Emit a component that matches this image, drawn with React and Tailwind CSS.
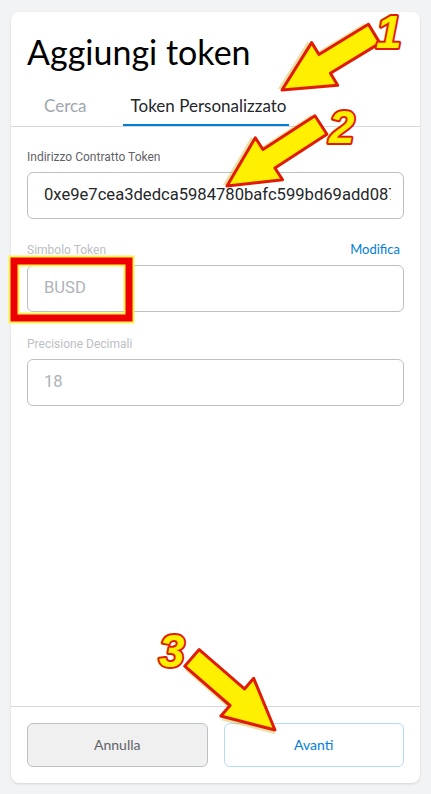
import React from 'react';

const euclid = { fontFamily: 'Lato, "Noto Sans", sans-serif' };

const Arrow = ({ x, y, angle, length }) => {
    const L = length;
    const pts = `0,0 -50,-25 -50,-11 ${-L},-11 ${-L},11 -50,11 -50,25`;
    return (
        <g transform={`translate(${x} ${y}) rotate(${angle})`}>
            <polygon points={pts} fill="#c9a200" opacity="0.35" transform="translate(3 3)" />
            <polygon points={pts} fill="#ffef00" stroke="#e01b00" strokeWidth="3" strokeLinejoin="round" />
        </g>
    );
};

const Num = ({ x, y, children }) => (
    <text
        x={x}
        y={y}
        fontFamily='"Liberation Sans", Arial, sans-serif'
        fontSize="46"
        fontWeight="900"
        fontStyle="italic"
        fill="#ffef00"
        stroke="#e01b00"
        strokeWidth="4"
        paintOrder="stroke"
        strokeLinejoin="round"
    >
        {children}
    </text>
);

const Field = ({ label, labelClass, value, valueClass, right }) => (
    <div>
        <div className="flex justify-between items-center h-4 mb-[7px]">
            <span className={`text-xs ${labelClass}`} style={{ fontFamily: 'Roboto, sans-serif' }}>{label}</span>
            {right}
        </div>
        <div className="h-[47px] border border-[#bbc0c5] rounded-md pl-4 pr-3 flex items-center">
            <div className="overflow-hidden flex-1">
                <span className={`block text-[16.6px] whitespace-nowrap ${valueClass}`} style={{ fontFamily: 'Roboto, sans-serif' }}>{value}</span>
            </div>
        </div>
    </div>
);

export default function App() {
    return (
        <div className="relative w-[431px] h-[794px] bg-[#f2f3f4] px-[11px] pt-[12px] overflow-hidden">
            <div className="bg-white rounded-lg h-[771px] flex flex-col shadow-sm">
                <div style={euclid}>
                    <h1 className="px-4 pt-5 text-[34px] leading-10 text-black">Aggiungi token</h1>
                    <div className="mt-4 flex border-b border-[#d6d9dc] text-[17px] leading-5">
                        <div className="ml-4 pl-[17px] pr-[36px] pt-2 pb-[10px] text-[#9fa6ae]">Cerca</div>
                        <div className="pl-2 pr-[3px] pt-2 pb-2 border-b-2 border-[#037dd6] text-[#24272a]">Token Personalizzato</div>
                    </div>
                </div>

                <div className="flex-1 px-4 pt-[22px] flex flex-col gap-[23px]">
                    <Field
                        label="Indirizzo Contratto Token"
                        labelClass="text-[#5f6368]"
                        value="0xe9e7cea3dedca5984780bafc599bd69add087d56"
                        valueClass="text-[#24272a]"
                    />
                    <Field
                        label="Simbolo Token"
                        labelClass="text-[#bbc0c5]"
                        value="BUSD"
                        valueClass="text-[#aeb3b8]"
                        right={<span className="text-[13px] text-[#037dd6] pr-1" style={euclid}>Modifica</span>}
                    />
                    <div className="mt-[1px]">
                        <Field
                            label="Precisione Decimali"
                            labelClass="text-[#bbc0c5]"
                            value="18"
                            valueClass="text-[#aeb3b8]"
                        />
                    </div>
                </div>

                <div className="border-t border-[#d6d9dc] px-4 pt-4 pb-4 flex gap-4" style={euclid}>
                    <button className="flex-1 h-11 rounded-md border border-[#bbc0c5] bg-[#f0f0f0] text-sm text-[#5f6368]">Annulla</button>
                    <button className="flex-1 h-11 rounded-md border border-[#b5dcf5] bg-white text-sm text-[#037dd6]">Avanti</button>
                </div>
            </div>

            <svg className="absolute inset-0 pointer-events-none" width="431" height="794">
                <rect x="14" y="261" width="115" height="57" fill="none" stroke="#fff34d" strokeWidth="11" />
                <rect x="14" y="261" width="115" height="57" fill="none" stroke="#ee0000" strokeWidth="7" />
                <Arrow x={282} y={90} angle={148.6} length={108} />
                <Arrow x={227} y={186} angle={147} length={112} />
                <Arrow x={275} y={730} angle={41} length={110} />
                <Num x={376} y={48}>1</Num>
                <Num x={329} y={143}>2</Num>
                <Num x={159} y={667}>3</Num>
            </svg>
        </div>
    );
}
